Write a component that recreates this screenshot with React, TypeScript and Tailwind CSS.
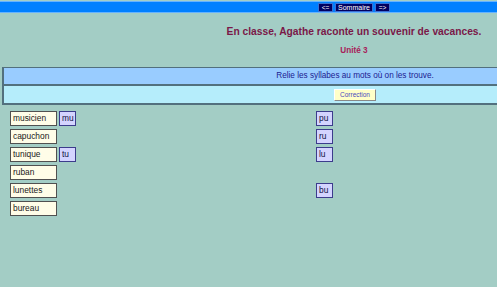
import React from 'react';

type Row = { word: string; left?: string; right?: string };

const rows: Row[] = [
  { word: 'musicien', left: 'mu', right: 'pu' },
  { word: 'capuchon', right: 'ru' },
  { word: 'tunique', left: 'tu', right: 'lu' },
  { word: 'ruban' },
  { word: 'lunettes', right: 'bu' },
  { word: 'bureau' },
];

const Syllable: React.FC<{ text?: string }> = ({ text }) =>
  text ? (
    <div className="w-[17px] h-[15px] bg-[#d4d4ff] border border-[#3c3c8c] text-[8.4px] leading-[13px] pl-[2px] text-[#101040]">
      {text}
    </div>
  ) : (
    <div className="h-[15px]" />
  );

const App: React.FC = () => {
  return (
    <div className="min-h-screen bg-[#a3cdc5] font-['Liberation_Sans',Arial,sans-serif] pt-px">
      {/* top navigation bar */}
      <div className="flex h-[12px] bg-[#0080ff] border-y border-[#66b3ff]">
        <div className="w-[211px] shrink-0" />
        <div className="flex-1 flex justify-center items-end gap-[2px]">
          <button className="h-[9px] w-[15px] bg-[#000060] border border-[#3a6fd0] text-white text-[6.5px] leading-[7px]">
            &lt;=
          </button>
          <button className="h-[9px] w-[38px] bg-[#000060] border border-[#3a6fd0] text-white text-[7px] leading-[7px]">
            Sommaire
          </button>
          <button className="h-[9px] w-[15px] bg-[#000060] border border-[#3a6fd0] text-white text-[6.5px] leading-[7px]">
            =&gt;
          </button>
        </div>
      </div>

      {/* heading */}
      <div className="flex">
        <div className="w-[211px] shrink-0" />
        <div className="flex-1 flex flex-col items-center pt-[12px]">
          <h1 className="text-[10.25px] font-bold leading-[14px] text-[#7a1848]">
            En classe, Agathe raconte un souvenir de vacances.
          </h1>
          <h2 className="text-[8.2px] font-bold leading-[10px] mt-[7px] text-[#a8205a]">
            Unité 3
          </h2>
        </div>
      </div>

      {/* instruction table */}
      <div className="mt-[11px] ml-[2px] border-l-2 border-t border-b-2 border-[#52707e]">
        <div className="flex h-[18px] bg-[#99ccff] border-b-2 border-[#52707e]">
          <div className="w-[209px] shrink-0" />
          <div className="flex-1 flex justify-center items-center text-[8.2px] text-[#202090]">
            Relie les syllabes au mots où on les trouve.
          </div>
        </div>
        <div className="flex h-[17px] bg-[#b5edfb]">
          <div className="w-[209px] shrink-0" />
          <div className="flex-1 flex justify-center items-center pt-px">
            <button className="h-[12px] w-[42px] bg-[#ffffc8] border border-t-white border-l-white border-r-[#888] border-b-[#888] text-[6.5px] leading-[10px] text-[#4848c0]">
              Correction
            </button>
          </div>
        </div>
      </div>

      {/* exercise */}
      <div className="pl-[10px] pt-[6px] flex flex-col gap-[3px]">
        {rows.map((r) => (
          <div key={r.word} className="grid grid-cols-[49px_257px_17px]">
            <div className="w-[47px] h-[15px] bg-[#fffde8] border border-[#505050] text-[8.4px] leading-[13px] pl-[2px] text-[#202020]">
              {r.word}
            </div>
            <Syllable text={r.left} />
            <Syllable text={r.right} />
          </div>
        ))}
      </div>
    </div>
  );
};

export default App;
